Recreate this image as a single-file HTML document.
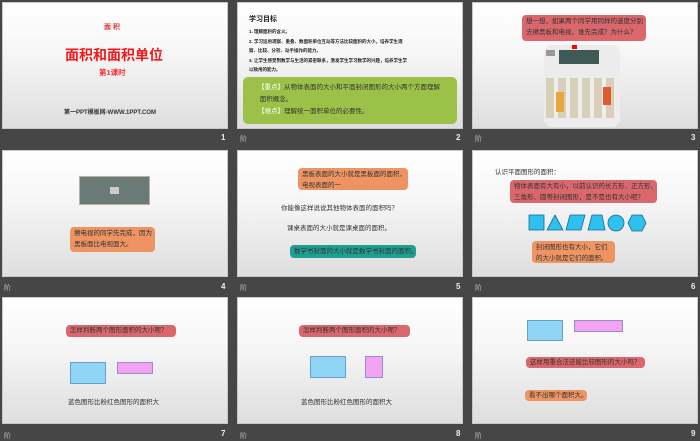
<!DOCTYPE html>
<html><head><meta charset="utf-8"><style>
*{margin:0;padding:0;box-sizing:border-box}
body{width:700px;height:438px;background:#464646;position:relative;overflow:hidden;font-family:"Liberation Sans","Noto Sans CJK SC",sans-serif}
.s{position:absolute;width:226px;height:127px;background:linear-gradient(#fff 0%,#f6f6f6 40%,#dedede 100%);border:1px solid #c8c8c8}
.a{position:absolute;white-space:nowrap}
.n{position:absolute;color:#eee;font-size:8px;font-weight:bold}
.j{position:absolute;color:#bbb;font-size:7px}
.b{position:absolute;border-radius:4px;font-size:7px;line-height:11px;color:#333;padding:1px 4px;white-space:nowrap}
.r{background:#d9676c}.o{background:#ee9463}.t{background:#1f9e92}
.bl{position:absolute;background:#8fd4f4;border:1px solid #6aa0c8}
.pk{position:absolute;background:#f3a3f1;border:1px solid #9090d0}
</style></head><body>
<!-- row1 -->
<div class="s" style="left:2px;top:2px"></div>
<div class="a" style="left:104px;top:22px;color:#e53030;font-size:7px;font-weight:bold">面 积</div>
<div class="a" style="left:65px;top:45px;color:#f01818;font-size:14px;font-weight:bold">面积和面积单位</div>
<div class="a" style="left:99px;top:67px;color:#f03030;font-size:7.5px;font-weight:bold">第1课时</div>
<div class="a" style="left:64px;top:107px;color:#333;font-size:6px;font-weight:bold">第一PPT模板网-WWW.1PPT.COM</div>
<div class="n" style="left:221px;top:133px">1</div>

<div class="s" style="left:237px;top:2px"></div>
<div class="a" style="left:249px;top:14px;color:#222;font-size:7px;font-weight:bold">学习目标</div>
<div class="a" style="left:249px;top:27px;color:#222;font-size:4.5px;font-weight:bold;line-height:9.5px">1. 理解面积的含义。<br>2. 学习运用观察、重叠、数面积单位互动等方法比较面积的大小，培养学生观<br>察、比较、分析、动手操作的能力。<br>3. 让学生感受到数学与生活的紧密联系，激发学生学习数学的兴趣，培养学生学<br>以致用的能力。</div>
<div class="a" style="left:243px;top:77px;width:214px;height:47px;background:#9bc148;border-radius:5px"></div>
<div class="a" style="left:258px;top:82px;font-size:6.5px;color:#333;line-height:12px"><span style="color:#fff">【重点】</span>从物体表面的大小和平面封闭图形的大小两个方面理解<br>&nbsp;面积概念。<br><span style="color:#fff">【难点】</span>理解统一面积单位的必要性。</div>
<div class="n" style="left:456px;top:133px">2</div>
<div class="j" style="left:240px;top:134px">阶</div>

<div class="s" style="left:472px;top:2px"></div>
<div class="b r" style="left:522px;top:15px;width:124px;height:26px;line-height:11px;font-size:6.5px">想一想，如果两个同学用同样的速度分别<br>去擦黑板和电视，谁先完成？为什么？</div>
<div class="a" style="left:544px;top:45px;width:76px;height:82px;background:#ececec;border-radius:8px"></div>
<div class="a" style="left:559px;top:50px;width:40px;height:14px;background:#3e5a55"></div>
<div class="a" style="left:546px;top:50px;width:9px;height:6px;background:#999"></div>
<div class="a" style="left:572px;top:45px;width:5px;height:4px;background:#f00"></div>
<div class="a" style="left:546px;top:78px;width:70px;height:40px;background:repeating-linear-gradient(90deg,#d8cfb8 0 8px,#eee 8px 12px)"></div>
<div class="a" style="left:556px;top:92px;width:8px;height:20px;background:#e8a640"></div>
<div class="a" style="left:603px;top:87px;width:8px;height:18px;background:#e05a30"></div>
<div class="n" style="left:691px;top:133px">3</div>
<div class="j" style="left:475px;top:134px">阶</div>

<!-- row2 -->
<div class="s" style="left:2px;top:150px"></div>
<div class="a" style="left:79px;top:176px;width:71px;height:29px;background:#6a7a76;border:1px solid #b8b0a0"></div>
<div class="a" style="left:110px;top:187px;width:9px;height:7px;background:#ccc"></div>
<div class="b o" style="left:70px;top:227px;width:85px;height:25px;font-size:6.5px">擦电视的同学先完成，因为<br>黑板面比电视面大。</div>
<div class="n" style="left:221px;top:282px">4</div>
<div class="j" style="left:4px;top:283px">阶</div>

<div class="s" style="left:237px;top:150px"></div>
<div class="b o" style="left:298px;top:168px;width:110px;height:22px;font-size:6.5px">黑板表面的大小就是黑板面的面积，<br>电视表面的一</div>
<div class="a" style="left:281px;top:202px;font-size:6.5px;color:#333">你能像这样说说其他物体表面的面积吗？</div>
<div class="a" style="left:287px;top:222px;font-size:6.5px;color:#333">课桌表面的大小就是课桌面的面积。</div>
<div class="b t" style="left:290px;top:245px;width:126px;height:13px;font-size:6.5px">数学书封面的大小就是数学书封面的面积。</div>
<div class="n" style="left:456px;top:282px">5</div>
<div class="j" style="left:240px;top:283px">阶</div>

<div class="s" style="left:472px;top:150px"></div>
<div class="a" style="left:495px;top:166px;font-size:6.5px;color:#333">认识平面图形的面积：</div>
<div class="b r" style="left:510px;top:180px;width:147px;height:23px;font-size:6.5px">物体表面有大有小，以前认识的长方形、正方形、<br>三角形、圆等封闭图形，是不是也有大小呢？</div>
<svg class="a" style="left:528px;top:213px" width="122" height="20" viewBox="0 0 122 20" fill="#2ec0ef" stroke="#1a6a8a" stroke-width="0.8">
<rect x="1" y="2" width="15" height="15"/><polygon points="27,2 19,17 35,17"/><polygon points="42,2 57,2 53,17 38,17"/><polygon points="64,2 74,2 77,17 60,17"/><circle cx="88" cy="10" r="8"/><polygon points="104,2 114,2 118,10 114,18 104,18 100,10"/></svg>
<div class="b o" style="left:532px;top:241px;width:83px;height:22px;font-size:6.5px">封闭图形也有大小，它们<br>的大小就是它们的面积。</div>
<div class="n" style="left:691px;top:282px">6</div>
<div class="j" style="left:475px;top:283px">阶</div>

<!-- row3 -->
<div class="s" style="left:2px;top:297px"></div>
<div class="b r" style="left:66px;top:325px;width:110px;height:12px;font-size:6.5px;line-height:10px">怎样判断两个图形面积的大小呢？</div>
<div class="bl" style="left:70px;top:362px;width:36px;height:22px"></div>
<div class="pk" style="left:117px;top:362px;width:36px;height:12px"></div>
<div class="a" style="left:68px;top:396px;font-size:6.5px;color:#333">蓝色图形比粉红色图形的面积大</div>
<div class="n" style="left:221px;top:429px">7</div>
<div class="j" style="left:4px;top:431px">阶</div>

<div class="s" style="left:237px;top:297px"></div>
<div class="b r" style="left:299px;top:325px;width:111px;height:12px;font-size:6.5px;line-height:10px">怎样判断两个图形面积的大小呢？</div>
<div class="bl" style="left:310px;top:356px;width:36px;height:22px"></div>
<div class="pk" style="left:365px;top:356px;width:18px;height:22px"></div>
<div class="a" style="left:301px;top:396px;font-size:6.5px;color:#333">蓝色图形比粉红色图形的面积大</div>
<div class="n" style="left:456px;top:429px">8</div>
<div class="j" style="left:240px;top:431px">阶</div>

<div class="s" style="left:472px;top:297px"></div>
<div class="bl" style="left:527px;top:320px;width:36px;height:21px"></div>
<div class="pk" style="left:574px;top:320px;width:49px;height:12px"></div>
<div class="b r" style="left:526px;top:357px;width:119px;height:11px;font-size:6.5px;line-height:9px">这样用重合法还能比较图形的大小吗？</div>
<div class="b o" style="left:525px;top:390px;width:62px;height:11px;font-size:6.5px;line-height:9px">看不出哪个面积大。</div>
<div class="n" style="left:691px;top:429px">9</div>
<div class="j" style="left:475px;top:431px">阶</div>
</body></html>
